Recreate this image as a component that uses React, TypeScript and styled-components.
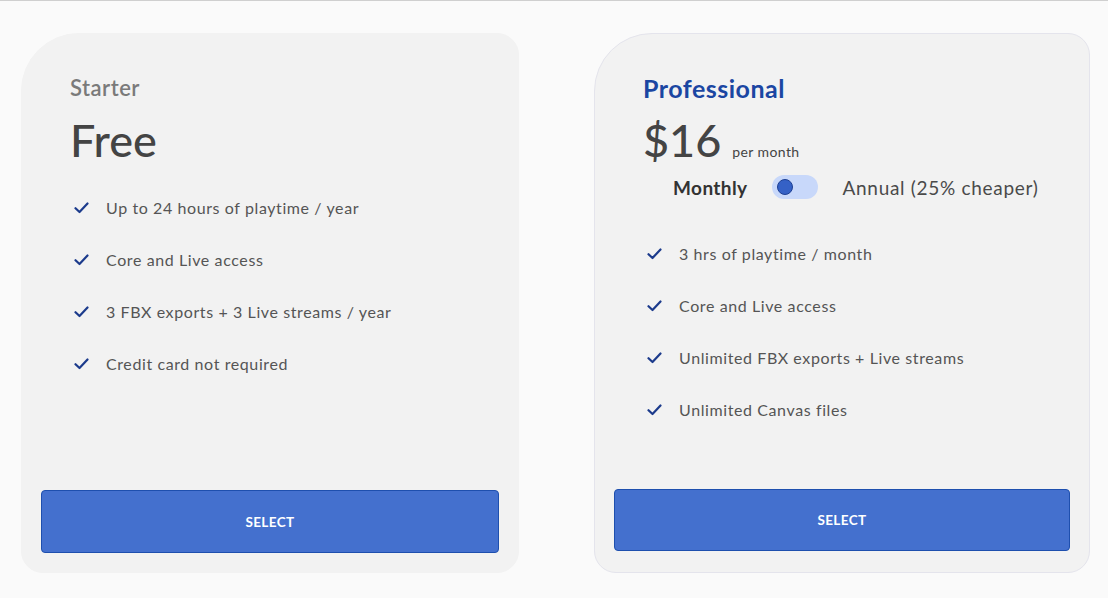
import React from 'react';
import styled, { createGlobalStyle } from 'styled-components';

const GlobalStyle = createGlobalStyle`
  body {
    margin: 0;
    background: #fafafa;
    font-family: Lato, "Open Sans", sans-serif;
  }
`;

const Page = styled.div`
  border-top: 1px solid #cfcfcf;
  padding: 32px 18px 24px 21px;
  display: flex;
  gap: 75px;
  align-items: stretch;
`;

const Card = styled.div<{ $bordered?: boolean }>`
  box-sizing: border-box;
  width: ${(p) => (p.$bordered ? '496px' : '498px')};
  height: 540px;
  background: #f2f2f2;
  border: 1px solid ${(p) => (p.$bordered ? '#e4e4ec' : '#f2f2f2')};
  border-radius: 58px 22px 22px 22px;
  padding: 0 19px ${(p) => (p.$bordered ? '21px' : '19px')};
  display: flex;
  flex-direction: column;
`;

const Head = styled.div`
  padding: 40px 0 0 29px;
`;

const Tier = styled.div<{ $pro?: boolean }>`
  font-size: ${(p) => (p.$pro ? '25px' : '22px')};
  font-weight: ${(p) => (p.$pro ? 700 : 600)};
  color: ${(p) => (p.$pro ? '#1b46a2' : '#7a7a7a')};
  letter-spacing: 0.5px;
  line-height: 28px;
`;

const Price = styled.div`
  display: flex;
  align-items: baseline;
  gap: 11px;
  margin-top: 14px;
  color: #444;
  font-size: 45px;
  font-weight: 500;
  line-height: 48px;
`;

const PerMonth = styled.span`
  font-size: 14px;
  color: #444;
  font-weight: 400;
  letter-spacing: 0.4px;
`;

const ToggleRow = styled.div`
  display: flex;
  align-items: center;
  margin: -2px 0 0 30px;
  font-size: 19px;
  color: #444;
  height: 26px;
`;

const ToggleLabel = styled.span<{ $active?: boolean }>`
  font-weight: ${(p) => (p.$active ? 700 : 400)};
  color: ${(p) => (p.$active ? '#333' : '#4a4a4a')};
  letter-spacing: ${(p) => (p.$active ? '0.4px' : '0.7px')};
`;

const Switch = styled.div`
  width: 46px;
  height: 24px;
  border-radius: 12px;
  background: #c8d8fa;
  margin: 0 25px 0 24px;
  display: flex;
  align-items: center;
  padding-left: 5px;
  box-sizing: border-box;
`;

const Knob = styled.div`
  width: 14px;
  height: 14px;
  border-radius: 50%;
  background: #3561c6;
  border: 1px solid #1d3f94;
`;

const Features = styled.ul<{ $top: number }>`
  list-style: none;
  margin: ${(p) => p.$top}px 0 0;
  padding: 0 0 0 33px;
  display: flex;
  flex-direction: column;
  gap: 30px;
`;

const Feature = styled.li`
  display: flex;
  align-items: center;
  gap: 17px;
  font-size: 16px;
  line-height: 22px;
  color: #555;
  letter-spacing: 0.6px;
`;

const Spacer = styled.div`
  flex: 1;
`;

const SelectButton = styled.button<{ $h: number }>`
  height: ${(p) => p.$h}px;
  width: 100%;
  background: #4470ce;
  border: 1px solid #1e4fae;
  border-radius: 4px;
  color: #fff;
  font-family: Lato, sans-serif;
  font-size: 13.5px;
  font-weight: 700;
  letter-spacing: 0.4px;
`;

const Check = () => (
  <svg width="15" height="12" viewBox="0 0 15 12" fill="none">
    <path d="M1.5 6.2 L5.5 10 L13.5 1.5" stroke="#1c3b8c" strokeWidth="2.2" strokeLinecap="round" strokeLinejoin="round" />
  </svg>
);

const starter = [
  'Up to 24 hours of playtime / year',
  'Core and Live access',
  '3 FBX exports + 3 Live streams / year',
  'Credit card not required',
];

const pro = [
  '3 hrs of playtime / month',
  'Core and Live access',
  'Unlimited FBX exports + Live streams',
  'Unlimited Canvas files',
];

export default function App() {
  return (
    <>
      <GlobalStyle />
      <Page>
        <Card>
          <Head>
            <Tier>Starter</Tier>
            <Price>Free</Price>
          </Head>
          <Features $top={33}>
            {starter.map((f) => (
              <Feature key={f}>
                <Check />
                {f}
              </Feature>
            ))}
          </Features>
          <Spacer />
          <SelectButton $h={63}>SELECT</SelectButton>
        </Card>
        <Card $bordered>
          <Head>
            <Tier $pro>Professional</Tier>
            <Price>
              $16<PerMonth>per month</PerMonth>
            </Price>
            <ToggleRow>
              <ToggleLabel $active>Monthly</ToggleLabel>
              <Switch>
                <Knob />
              </Switch>
              <ToggleLabel>Annual (25% cheaper)</ToggleLabel>
            </ToggleRow>
          </Head>
          <Features $top={43}>
            {pro.map((f) => (
              <Feature key={f}>
                <Check />
                {f}
              </Feature>
            ))}
          </Features>
          <Spacer />
          <SelectButton $h={62}>SELECT</SelectButton>
        </Card>
      </Page>
    </>
  );
}
